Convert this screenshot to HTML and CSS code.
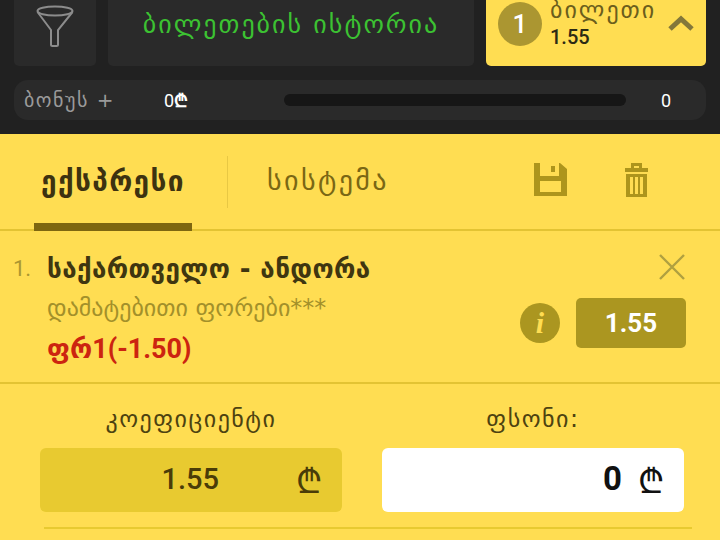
FILE: index.html
```html
<!DOCTYPE html>
<html lang="ka">
<head>
    <meta charset="UTF-8">
    <title>ბილეთი</title>
    <link rel="stylesheet" href="styles.css">
</head>
<body>
    <div class="top">
        <div class="top-row">
            <div class="filter-btn">
                <svg class="funnel" width="38" height="42" viewBox="0 0 38 42" fill="none" stroke="#8c8c8c" stroke-width="2">
                    <ellipse cx="19" cy="6" rx="17.5" ry="4.5"/>
                    <path d="M1.5 7 L15 25 V39.5 Q15 41 16.5 41 H20.5 Q22 41 22 39.5 V25 L36.5 7"/>
                </svg>
            </div>
            <div class="history-btn">ბილეთების ისტორია</div>
            <div class="ticket-btn">
                <span class="count">1</span>
                <div class="ticket-info">
                    <span class="ticket-name">ბილეთი</span>
                    <span class="ticket-odd">1.55</span>
                </div>
                <svg class="chevron" width="26" height="16" viewBox="0 0 26 16" fill="none" stroke="#83773a" stroke-width="5">
                    <path d="M2 14 L13 4 L24 14"/>
                </svg>
            </div>
        </div>
        <div class="bonus">
            <span class="bonus-name">ბონუს +</span>
            <span class="bonus-sum">0<span class="lari">₾</span></span>
            <div class="progress"></div>
            <span class="bonus-end">0</span>
        </div>
    </div>

    <div class="slip">
        <div class="tabs">
            <div class="tab active">ექსპრესი</div>
            <div class="tab-sep"></div>
            <div class="tab">სისტემა</div>
            <div class="tab-icons">
                <svg width="33" height="33" viewBox="0 0 33 33" fill="#ad951c">
                    <path fill-rule="evenodd" d="M0 0 H26 L33 6 V33 H0 Z M6 0 V13 H25 V0 Z M6 18 V29 H27 V18 Z M17 3 V9 H21 V3 Z"/>
                </svg>
                <svg width="23" height="34" viewBox="0 0 23 34" fill="#ad951c">
                    <path fill-rule="evenodd" d="M0 5 H6 V0 H17 V5 H23 V9 H0 Z M9 3 V5 H14 V3 Z M1 11 H22 V34 H1 Z M5 14 V31 H8 V14 Z M10 14 V31 H13 V14 Z M15 14 V31 H18 V14 Z"/>
                </svg>
            </div>
        </div>

        <div class="bet">
            <span class="bet-num">1.</span>
            <div class="bet-text">
                <div class="bet-match">საქართველო - ანდორა</div>
                <div class="bet-market">დამატებითი ფორები***</div>
                <div class="bet-pick">ფრ1(-1.50)</div>
            </div>
            <div class="bet-side">
                <svg class="close" width="26" height="26" viewBox="0 0 26 26" stroke="#b0a040" stroke-width="2.4">
                    <path d="M1 1 L25 25 M25 1 L1 25"/>
                </svg>
                <div class="bet-odds">
                    <span class="info-icon">i</span>
                    <span class="odd-box">1.55</span>
                </div>
            </div>
        </div>

        <div class="stakes">
            <div class="stake">
                <div class="stake-label">კოეფიციენტი</div>
                <div class="stake-box coef">
                    <span class="stake-num">1.55</span>
                    <span class="stake-lari">₾</span>
                </div>
            </div>
            <div class="stake">
                <div class="stake-label">ფსონი:</div>
                <div class="stake-box amount">
                    <span class="stake-num">0</span>
                    <span class="stake-lari">₾</span>
                </div>
            </div>
        </div>
        <div class="stake-line"></div>
    </div>
</body>
</html>
```

FILE: styles.css
```css
* {
    box-sizing: border-box;
}
html, body {
    height: 540px;
    overflow: hidden;
}
body {
    margin: 0;
    background: #ffdd52;
    font-family: "Roboto", "DejaVu Sans", sans-serif;
}

/* dark top part */
.top {
    height: 134px;
    padding: 0 14px;
    background: #212121;
    overflow: hidden;
}
.top-row {
    display: flex;
    gap: 12px;
    height: 66px;
}
.filter-btn {
    width: 82px;
    display: flex;
    justify-content: center;
    align-items: flex-start;
    padding-top: 5px;
    background: #2a2a2a;
    border-radius: 0 0 5px 5px;
}
.history-btn {
    flex: 1;
    display: flex;
    justify-content: center;
    align-items: center;
    padding-bottom: 18px;
    color: #3cc232;
    font-family: "DejaVu Sans", sans-serif;
    font-size: 26px;
    letter-spacing: 2px;
    white-space: nowrap;
    background: #2a2a2a;
    border-radius: 0 0 5px 5px;
}
.ticket-btn {
    width: 220px;
    display: flex;
    align-items: flex-start;
    padding: 2px 12px 0;
    background: #ffdd52;
    border-radius: 0 0 5px 5px;
}
.count {
    flex: none;
    width: 44px;
    height: 44px;
    display: flex;
    justify-content: center;
    align-items: center;
    color: #fff;
    font-size: 26px;
    font-weight: 500;
    background: #ab9631;
    border-radius: 50%;
}
.ticket-info {
    display: flex;
    flex-direction: column;
    margin-left: 8px;
    margin-top: -6px;
    color: #2c2a14;
}
.ticket-name {
    font-family: "DejaVu Sans", sans-serif;
    font-size: 24px;
    line-height: 28px;
    letter-spacing: 2px;
    color: #6b5e1c;
}
.ticket-odd {
    font-size: 20px;
    font-weight: 500;
    line-height: 26px;
}
.chevron {
    margin-left: auto;
    margin-top: 13px;
}
.bonus {
    height: 40px;
    margin-top: 14px;
    display: flex;
    align-items: center;
    padding: 0 10px;
    color: #9a9a9a;
    background: #2a2a2a;
    border-radius: 14px;
}
.bonus-name {
    width: 140px;
    font-family: "DejaVu Sans", sans-serif;
    font-size: 20px;
    letter-spacing: 1.5px;
    white-space: nowrap;
}
.bonus-sum {
    width: 120px;
    color: #fff;
    font-size: 18px;
}
.lari {
    font-family: "DejaVu Sans", sans-serif;
    font-size: 18px;
    font-weight: 700;
}
.progress {
    width: 342px;
    height: 12px;
    background: #161616;
    border-radius: 6px;
}
.bonus-end {
    margin-left: 35px;
    color: #fff;
    font-size: 18px;
}

/* yellow slip */
.tabs {
    position: relative;
    height: 97px;
    display: flex;
    align-items: center;
    padding-left: 34px;
    border-bottom: 2px solid #e3c333;
}
.tab {
    width: 158px;
    padding-bottom: 2px;
    font-family: "DejaVu Sans", sans-serif;
    font-size: 28px;
    letter-spacing: 2.4px;
    white-space: nowrap;
    color: #7a6714;
}
.tab.active {
    align-self: stretch;
    display: flex;
    justify-content: center;
    align-items: center;
    margin-bottom: -2px;
    padding-bottom: 0;
    padding-top: 6px;
    font-weight: 700;
    letter-spacing: 1.4px;
    color: #3d3210;
    border-bottom: 8px solid #7e6610;
}
.tab-sep {
    width: 1px;
    height: 52px;
    margin: 0 39px 0 35px;
    background: #e8c844;
}
.tab-icons {
    display: flex;
    align-items: center;
    gap: 58px;
    margin-left: auto;
    margin-right: 72px;
    margin-top: -4px;
}

.bet {
    height: 153px;
    display: flex;
    padding: 18px 34px 0 13px;
    border-bottom: 2px solid #e3c333;
}
.bet-num {
    width: 34px;
    padding-top: 7px;
    font-size: 22px;
    color: #ab9631;
}
.bet-text {
    flex: 1;
}
.bet-match {
    font-family: "DejaVu Sans", sans-serif;
    font-size: 26px;
    font-weight: 700;
    line-height: 40px;
    letter-spacing: 0.4px;
    white-space: nowrap;
    color: #3f3610;
}
.bet-market {
    font-family: "DejaVu Sans", sans-serif;
    font-size: 24px;
    line-height: 38px;
    white-space: nowrap;
    color: #a3902a;
}
.bet-pick {
    margin-top: 7px;
    font-size: 27px;
    font-weight: 700;
    line-height: 30px;
    color: #cc2410;
}
.bet-side {
    display: flex;
    flex-direction: column;
    align-items: flex-end;
}
.close {
    margin-top: 5px;
    margin-right: 1px;
}
.bet-odds {
    display: flex;
    align-items: center;
    gap: 16px;
    margin-top: 18px;
}
.info-icon {
    width: 40px;
    height: 40px;
    display: flex;
    justify-content: center;
    align-items: center;
    color: #ffdd52;
    font-family: "Liberation Serif", serif;
    font-size: 30px;
    font-weight: 700;
    font-style: italic;
    background: #ab9620;
    border-radius: 50%;
}
.odd-box {
    width: 110px;
    height: 50px;
    display: flex;
    justify-content: center;
    align-items: center;
    color: #fff;
    font-size: 26px;
    font-weight: 700;
    background: #ab9620;
    border-radius: 5px;
}

.stakes {
    display: flex;
    padding: 0 36px 0 40px;
    gap: 40px;
}
.stake {
    flex: 1;
}
.stake-label {
    height: 64px;
    padding-top: 21px;
    text-align: center;
    font-family: "DejaVu Sans", sans-serif;
    font-size: 24px;
    letter-spacing: 1.5px;
    white-space: nowrap;
    color: #4d4210;
}
.stake-box {
    height: 64px;
    display: flex;
    align-items: center;
    border-radius: 6px;
    padding-right: 20px;
}
.stake-box.coef {
    background: #e8ca30;
    color: #4a3c08;
}
.stake-box.amount {
    background: #fff;
    color: #111;
}
.stake-num {
    margin-left: auto;
    padding-bottom: 4px;
    font-size: 29px;
    font-weight: 500;
}
.coef .stake-num {
    margin-right: 77px;
    padding-bottom: 2px;
}
.amount .stake-num {
    margin-right: 16px;
    font-size: 33px;
    font-weight: 700;
}
.stake-lari {
    font-family: "DejaVu Sans", sans-serif;
    font-size: 34px;
}
.stake-line {
    height: 2px;
    margin: 15px 28px 0 44px;
    background: #e8ca30;
}
```
